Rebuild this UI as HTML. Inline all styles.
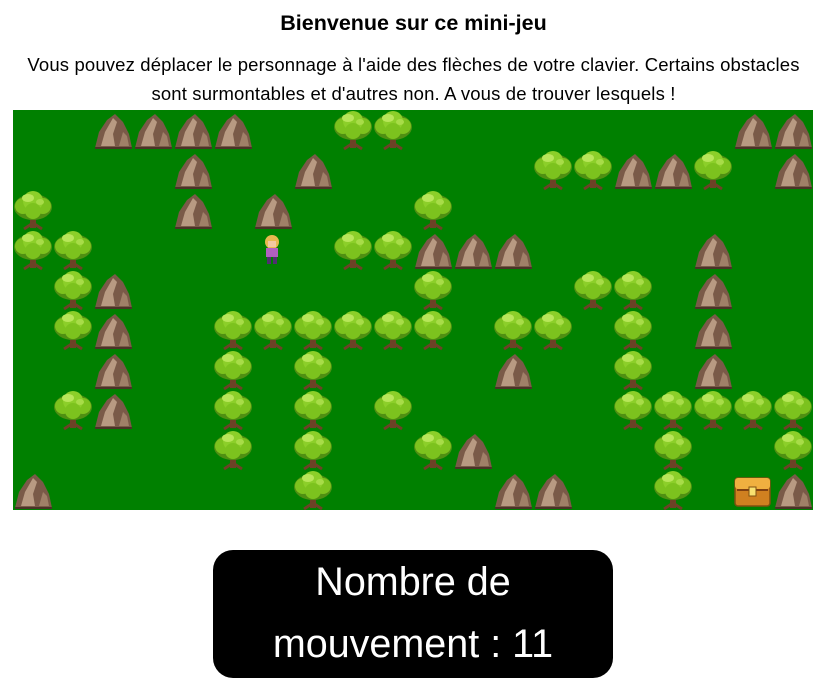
<!DOCTYPE html>
<html><head><meta charset="utf-8"><style>
html,body{margin:0;padding:0;background:#fff;width:827px;height:683px;overflow:hidden;font-family:"Liberation Sans",sans-serif;color:#000}
h1{position:absolute;top:9px;left:0;width:827px;text-align:center;margin:0;font-size:21.5px;font-weight:bold;line-height:28px}
p{position:absolute;top:50px;left:0;width:827px;text-align:center;margin:0;font-size:18.5px;line-height:29px;letter-spacing:0.15px}
#game{position:absolute;left:13px;top:110px;width:800px;height:400px;background:#008000}
#box{position:absolute;left:213px;top:550px;width:400px;height:128px;background:#000;border-radius:20px;color:#fff;font-size:39.5px;line-height:62px;text-align:center;padding-top:1px;box-sizing:border-box}
</style></head><body>
<h1>Bienvenue sur ce mini-jeu</h1>
<p>Vous pouvez déplacer le personnage à l'aide des flèches de votre clavier. Certains obstacles<br>sont surmontables et d'autres non. A vous de trouver lesquels !</p>
<svg id="game" viewBox="0 0 800 400" xmlns="http://www.w3.org/2000/svg">
<defs>
<g id="t">
<rect x="17" y="24" width="6" height="14" fill="#6b4226"/>
<path d="M11 39 L20 33 L29 39" stroke="#6b4226" stroke-width="3" fill="none"/>
<ellipse cx="20" cy="17" rx="19" ry="13" fill="#4f8f12"/>
<circle cx="10" cy="16" r="8" fill="#7cc21e"/>
<circle cx="30" cy="16" r="8" fill="#7cc21e"/>
<circle cx="20" cy="11" r="10" fill="#8ccf2a"/>
<circle cx="20" cy="21" r="8" fill="#7cc21e"/>
<ellipse cx="15" cy="8" rx="6" ry="4" fill="#b8e65a"/>
<ellipse cx="27" cy="12" rx="4" ry="3" fill="#a8dc48"/>
</g>
<g id="r">
<path d="M2 38 L6 22 L14 10 L22 4 L30 12 L36 24 L39 38 Z" fill="#7a5a48"/>
<path d="M8 36 L12 22 L20 8 L24 12 L20 24 L22 36 Z" fill="#b89a82"/>
<path d="M26 36 L30 22 L34 26 L36 36 Z" fill="#a08068"/>
<path d="M2 38 L39 38" stroke="#4a3428" stroke-width="2"/>
</g>
</defs>
<use href="#r" x="80" y="0"/><use href="#r" x="120" y="0"/><use href="#r" x="160" y="0"/><use href="#r" x="200" y="0"/>
<use href="#r" x="720" y="0"/><use href="#r" x="760" y="0"/>
<use href="#r" x="160" y="40"/><use href="#r" x="280" y="40"/><use href="#r" x="600" y="40"/><use href="#r" x="640" y="40"/><use href="#r" x="760" y="40"/>
<use href="#r" x="160" y="80"/><use href="#r" x="240" y="80"/>
<use href="#r" x="400" y="120"/><use href="#r" x="440" y="120"/><use href="#r" x="480" y="120"/><use href="#r" x="680" y="120"/>
<use href="#r" x="80" y="160"/><use href="#r" x="680" y="160"/>
<use href="#r" x="80" y="200"/><use href="#r" x="680" y="200"/>
<use href="#r" x="80" y="240"/><use href="#r" x="480" y="240"/><use href="#r" x="680" y="240"/>
<use href="#r" x="80" y="280"/>
<use href="#r" x="440" y="320"/>
<use href="#r" x="0" y="360"/><use href="#r" x="480" y="360"/><use href="#r" x="520" y="360"/><use href="#r" x="760" y="360"/>
<use href="#t" x="320" y="0"/><use href="#t" x="360" y="0"/>
<use href="#t" x="520" y="40"/><use href="#t" x="560" y="40"/><use href="#t" x="680" y="40"/>
<use href="#t" x="0" y="80"/><use href="#t" x="400" y="80"/>
<use href="#t" x="0" y="120"/><use href="#t" x="40" y="120"/><use href="#t" x="320" y="120"/><use href="#t" x="360" y="120"/>
<use href="#t" x="40" y="160"/><use href="#t" x="400" y="160"/><use href="#t" x="560" y="160"/><use href="#t" x="600" y="160"/>
<use href="#t" x="40" y="200"/><use href="#t" x="200" y="200"/><use href="#t" x="240" y="200"/><use href="#t" x="280" y="200"/><use href="#t" x="320" y="200"/><use href="#t" x="360" y="200"/><use href="#t" x="400" y="200"/><use href="#t" x="480" y="200"/><use href="#t" x="520" y="200"/><use href="#t" x="600" y="200"/>
<use href="#t" x="200" y="240"/><use href="#t" x="280" y="240"/><use href="#t" x="600" y="240"/>
<use href="#t" x="40" y="280"/><use href="#t" x="200" y="280"/><use href="#t" x="280" y="280"/><use href="#t" x="360" y="280"/><use href="#t" x="600" y="280"/><use href="#t" x="640" y="280"/><use href="#t" x="680" y="280"/><use href="#t" x="720" y="280"/><use href="#t" x="760" y="280"/>
<use href="#t" x="200" y="320"/><use href="#t" x="280" y="320"/><use href="#t" x="400" y="320"/><use href="#t" x="640" y="320"/><use href="#t" x="760" y="320"/>
<use href="#t" x="280" y="360"/><use href="#t" x="640" y="360"/>
<g transform="translate(249,124)">
<circle cx="10" cy="8" r="7" fill="#e8b850"/>
<rect x="6" y="7" width="8" height="6" fill="#f2c8a0"/>
<rect x="4" y="14" width="12" height="9" fill="#b060c0"/>
<rect x="5" y="23" width="4" height="7" fill="#503070"/><rect x="11" y="23" width="4" height="7" fill="#503070"/>
</g>
<g transform="translate(722,366)">
<rect x="0" y="2" width="35" height="28" rx="3" fill="#d08020" stroke="#805010" stroke-width="1.5"/>
<rect x="0" y="2" width="35" height="11" rx="3" fill="#f0b040"/>
<rect x="2" y="13" width="31" height="2" fill="#804010"/>
<rect x="14" y="11" width="7" height="9" fill="#f8e070" stroke="#805010"/>
</g>
</svg>
<div id="box">Nombre de<br>mouvement : 11</div>
</body></html>
